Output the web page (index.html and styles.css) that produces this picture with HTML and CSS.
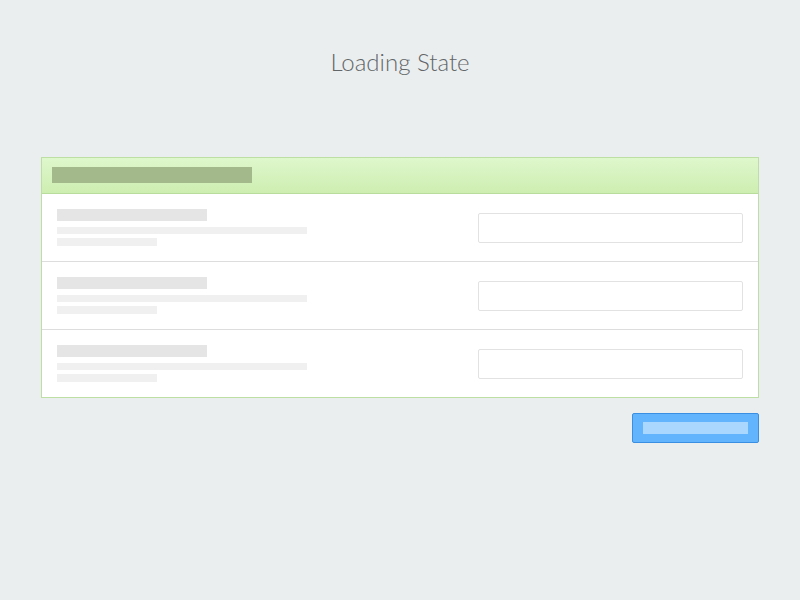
FILE: index.html
```html
<!DOCTYPE html>
<html>
<head>
<meta charset="utf-8">
<link rel="stylesheet" href="styles.css">
</head>
<body>
<h1 class="title">Loading State</h1>
<div class="card">
  <div class="card-head"><div class="head-bar"></div></div>
  <div class="row">
    <div class="text">
      <div class="sk-title"></div>
      <div class="sk-line long"></div>
      <div class="sk-line short"></div>
    </div>
    <div class="input"></div>
  </div>
  <div class="row">
    <div class="text">
      <div class="sk-title"></div>
      <div class="sk-line long"></div>
      <div class="sk-line short"></div>
    </div>
    <div class="input"></div>
  </div>
  <div class="row">
    <div class="text">
      <div class="sk-title"></div>
      <div class="sk-line long"></div>
      <div class="sk-line short"></div>
    </div>
    <div class="input"></div>
  </div>
</div>
<div class="actions">
  <div class="btn"><div class="btn-bar"></div></div>
</div>
</body>
</html>
```
FILE: styles.css
```css
html, body {
  margin: 0;
  padding: 0;
  background: #ebeeef;
  width: 800px;
  height: 600px;
  overflow: hidden;
}
body {
  padding: 0 41px;
  box-sizing: border-box;
}
.title {
  margin: 0;
  padding-top: 47px;
  height: 157px;
  box-sizing: border-box;
  text-align: center;
  font-family: Lato, "Open Sans", sans-serif;
  font-weight: 300;
  font-size: 24px;
  line-height: 30px;
  color: #626668;
}
.card {
  border: 1px solid #bddfa3;
  background: #fff;
}
.card-head {
  border-bottom: 1px solid #b9dc9c;
  background: linear-gradient(#dff7cc, #cdeeb1);
  padding: 9px 0 0 10px;
  box-sizing: border-box;
  height: 36px;
}
.head-bar {
  width: 200px;
  height: 16px;
  background: #a4b98b;
}
.row {
  display: flex;
  justify-content: space-between;
  height: 68px;
  box-sizing: border-box;
  padding: 15px 15px 0 15px;
  border-bottom: 1px solid #dddddd;
}
.row:last-child {
  border-bottom: none;
  height: 67px;
}
.sk-title {
  width: 150px;
  height: 12px;
  background: #e5e5e5;
}
.sk-line {
  height: 7px;
  background: #f0f0f0;
  margin-top: 6px;
}
.sk-line.short {
  width: 100px;
  height: 8px;
  margin-top: 4px;
}
.sk-line.long {
  width: 250px;
}
.input {
  margin-top: 4px;
  width: 265px;
  height: 30px;
  box-sizing: border-box;
  border: 1px solid #e2e2e2;
  border-radius: 2px;
  background: #fff;
}
.actions {
  display: flex;
  justify-content: flex-end;
  padding-top: 15px;
}
.btn {
  width: 127px;
  height: 30px;
  box-sizing: border-box;
  border: 1px solid #3a8fe3;
  border-radius: 2px;
  background: #62b5fd;
  padding: 8px 0 0 10px;
}
.btn-bar {
  width: 105px;
  height: 12px;
  background: #a9d7fd;
}
```
